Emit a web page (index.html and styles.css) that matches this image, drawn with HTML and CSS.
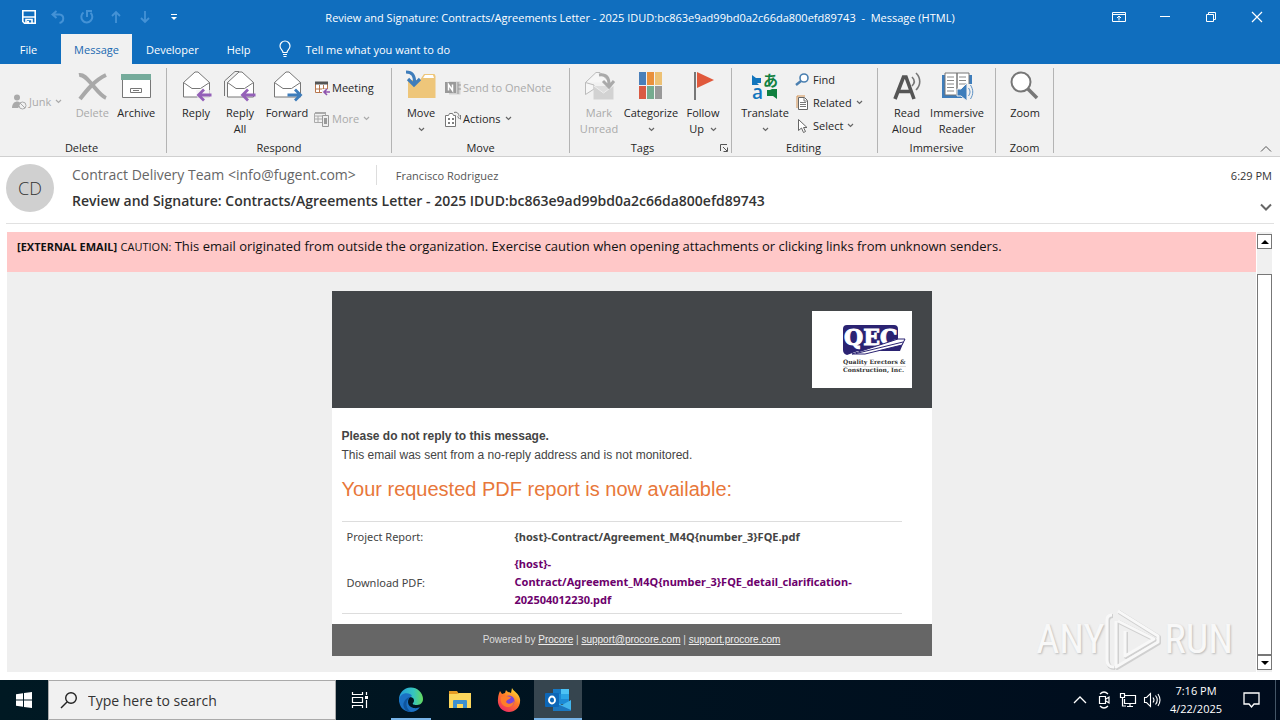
FILE: index.html
```html
<!DOCTYPE html>
<html lang="en">
<head>
<meta charset="utf-8">
<title>Message (HTML)</title>
<link rel="stylesheet" href="styles.css">
</head>
<body>
<svg class="defs" aria-hidden="true">
  <symbol id="caret" viewBox="0 0 7 5"><path d="M1 1l2.5 2.5L6 1" fill="none" stroke="currentColor" stroke-width="1.2"/></symbol>
  <symbol id="envelope" viewBox="0 0 32 32"><path d="M3.500 12.500L15 2h3l11.500 10.500V27H3.500z" fill="#fff" stroke="#777"/><path d="M3.500 12.500L12 18.500h8.500l9-6" fill="none" stroke="#777"/></symbol>
  <symbol id="arrow" viewBox="0 0 16 14"><path d="M15.500 7H3M8 1.500L2.500 7 8 12.500" fill="none" stroke="currentColor" stroke-width="2.800"/></symbol>
</svg>
<div class="window">
  <header class="titlebar">
    <div class="quick">
      <button class="qbtn" aria-label="Save"><svg width="16" height="16" viewBox="0 0 16 16"><path d="M1.800 1.800h12.400v12.400H3.500L1.800 12.500z" fill="none" stroke="#fff" stroke-width="1.600"/><path d="M2 8h12M5 14v-3.500h6V14" fill="none" stroke="#fff" stroke-width="1.600"/><path d="M6 12h2v2.500H6z" fill="#fff"/></svg></button>
      <button class="qbtn dim" aria-label="Undo"><svg width="16" height="16" viewBox="0 0 16 16"><path d="M6.500 2L2.500 5.500l4 3.500M3 5.500h6.500c5 .5 5 7.500 0 8.500" fill="none" stroke="currentColor" stroke-width="2"/></svg></button>
      <button class="qbtn dim" aria-label="Redo"><svg width="16" height="16" viewBox="0 0 16 16"><path d="M4.500 3.500A5.500 5.500 0 1 0 11.500 3.800M8 8V2h5" fill="none" stroke="currentColor" stroke-width="2"/></svg></button>
      <button class="qbtn dim" aria-label="Previous item"><svg width="16" height="16" viewBox="0 0 16 16"><path d="M8 14V3.500M4 7l4-4 4 4" fill="none" stroke="currentColor" stroke-width="1.800"/></svg></button>
      <button class="qbtn dim" aria-label="Next item"><svg width="16" height="16" viewBox="0 0 16 16"><path d="M8 2v10.500M4 9l4 4 4-4" fill="none" stroke="currentColor" stroke-width="1.800"/></svg></button>
      <button class="qbtn" aria-label="Customize toolbar"><svg width="16" height="16" viewBox="0 0 16 16"><path d="M5 5.500h6" stroke="#fff"/><path d="M5 8h6l-3 3z" fill="#fff"/></svg></button>
    </div>
    <div class="wintitle">Review and Signature: Contracts/Agreements Letter - 2025 IDUD:bc863e9ad99bd0a2c66da800efd89743 &nbsp;-&nbsp; Message (HTML)</div>
    <div class="controls">
      <button aria-label="Ribbon display options"><svg width="14" height="12" viewBox="0 0 14 12"><path d="M.5 1.500h13v9H.5zM.5 3.500h13M7 9.500V5.500M5 7l2-2 2 2" fill="none" stroke="#fff"/></svg></button>
      <button aria-label="Minimize"><svg width="12" height="12" viewBox="0 0 12 12"><path d="M1 5.500h10" stroke="#fff"/></svg></button>
      <button aria-label="Restore"><svg width="12" height="12" viewBox="0 0 12 12"><path d="M1.500 3.500h7v7h-7zM3.500 3V1.500h7v7H9" fill="none" stroke="#fff"/></svg></button>
      <button aria-label="Close"><svg width="12" height="12" viewBox="0 0 12 12"><path d="M1 1l10 10M11 1L1 11" stroke="#fff" stroke-width="1.200"/></svg></button>
    </div>
  </header>
  <nav class="tabs">
    <button class="tab file">File</button>
    <button class="tab active">Message</button>
    <button class="tab">Developer</button>
    <button class="tab">Help</button>
    <label class="tell"><svg width="14" height="18" viewBox="0 0 14 18"><path d="M5 12.500C5 10 2 9.500 2 6a5 5 0 0 1 10 0c0 3.500-3 4-3 6.500zM5 14.500h4M5.500 16.500h3" fill="none" stroke="#fff" stroke-width="1.200"/></svg><input type="text" placeholder="Tell me what you want to do" aria-label="Tell me what you want to do"></label>
  </nav>

  <div class="ribbon">
    <section class="group g-delete">
      <div class="tools">
        <div class="stack one"><button class="small dis"><svg width="16" height="16" viewBox="0 0 16 16"><circle cx="6" cy="3.500" r="3" fill="#aaa"/><path d="M1 14c0-8 9-8 9-3l-3 3z" fill="#aaa"/><circle cx="11.500" cy="11.500" r="3.500" fill="#f1f1f1" stroke="#aaa"/><path d="M9 9l5 5" stroke="#aaa"/></svg>Junk<svg class="caret"><use href="#caret"/></svg></button></div>
        <button class="big dis"><svg width="32" height="32" viewBox="0 0 32 32"><path d="M3 5C8 4 12 10 16 14.500 20 19 25 26 30 28M30 5C19 10 11 20 4 29" fill="none" stroke="#a9a9a9" stroke-width="4"/></svg>Delete</button>
        <button class="big"><svg width="32" height="32" viewBox="0 0 32 32"><path d="M2.500 9.500h28v18h-28z" fill="#fff" stroke="#777"/><path d="M1 4h30v6H1z" fill="#75ab9b"/><path d="M10.500 18.500h11v4h-11z" fill="#fff" stroke="#777"/><path d="M13 20.500h6" stroke="#777"/></svg>Archive</button>
      </div><h2>Delete</h2>
    </section>
    <section class="group g-respond">
      <div class="tools">
        <button class="big"><svg width="32" height="32" viewBox="0 0 32 32"><use href="#envelope"/><path d="M16 20h16v12H18z" fill="#f1f1f1" opacity=".7"/><use class="purple" href="#arrow" x="16" y="18" width="16" height="14"/></svg>Reply</button>
        <button class="big"><svg width="32" height="32" viewBox="0 0 32 32"><path d="M.5 26V11L11 1.500h4" fill="none" stroke="#777"/><use href="#envelope"/><use class="purple" href="#arrow" x="16" y="18" width="16" height="14"/></svg>Reply<br>All</button>
        <button class="big wide"><svg width="32" height="32" viewBox="0 0 32 32"><use href="#envelope"/><g transform="rotate(180 24 25)"><use class="blue" href="#arrow" x="16" y="18" width="16" height="14"/></g></svg>Forward</button>
        <div class="stack">
          <button class="small"><svg width="16" height="16" viewBox="0 0 16 16"><path d="M1.500 2.500h12v10h-12zM5.500 5v8M9.500 5v8M2 9h11" fill="#fff" stroke="#b8764d"/><path d="M1 1.500h13v3H1z" fill="#555"/><path d="M8 9h8v7H8z" fill="#f1f1f1"/><path d="M16 12h-6M13 9l-3 3 3 3" fill="none" stroke="#8f53ad" stroke-width="1.600"/></svg>Meeting</button>
          <button class="small dis"><svg width="16" height="16" viewBox="0 0 16 16"><path d="M.5 2.500h11v9H.5zM1 5h10M4 5v6M1 8h7" fill="none" stroke="#aaa"/><path d="M8.500 4.500h6v11h-6z" fill="#eee" stroke="#999"/><path d="M10 7h3v6h-3z" fill="#999"/><path d="M1 1h11v2H1z" fill="#aaa"/></svg>More<svg class="caret"><use href="#caret"/></svg></button>
        </div>
      </div><h2>Respond</h2>
    </section>
    <section class="group g-move">
      <div class="tools">
        <button class="big"><svg width="32" height="32" viewBox="0 0 32 32"><path d="M3 10h12l4-6h10.500l1 2v22H3z" fill="#eec67a"/><path d="M20 5h8l1 3H18z" fill="#fff"/><path d="M1 2c6 0 9 3 8.500 12M3 9l6 6 6-6" fill="none" stroke="#3e7dbb" stroke-width="3.200"/></svg>Move<svg class="caret under"><use href="#caret"/></svg></button>
        <div class="stack">
          <button class="small dis"><svg width="16" height="16" viewBox="0 0 16 16"><path d="M4 1.500h11.500v13H4z" fill="#d0d0d0"/><path d="M13 2v12M13 5h3M13 9h3" stroke="#999"/><path d="M0 2h11v11H0z" fill="#999"/><path d="M3.500 10.500v-6l4 6v-6" fill="none" stroke="#fff" stroke-width="1.500"/></svg>Send to OneNote</button>
          <button class="small"><svg width="16" height="16" viewBox="0 0 16 16"><path d="M.5 4.500h3l1-2h3l1 2h2v11H.5z" fill="#fff" stroke="#777"/><path d="M3 8h2M3 12h2M7 8h2M7 12h2" stroke="#555" stroke-width="1.400"/><path d="M9 1.500c3-1 5 1 5 4M15.500 4v4.500M12.500 5.500l2 2.500" fill="none" stroke="#777"/></svg>Actions<svg class="caret"><use href="#caret"/></svg></button>
        </div>
      </div><h2>Move</h2>
    </section>
    <section class="group g-tags">
      <div class="tools">
        <button class="big dis"><svg width="32" height="32" viewBox="0 0 32 32"><path d="M2.500 12.500L13 2.500h4l10 10M2.500 12.500v12L11 19V15zM13 19h17" fill="#f6f6f6" stroke="#bbb"/><path d="M10.500 16h20v13.500h-20z" fill="#d2d2d2"/><path d="M11 16l9.500 7 9.500-7" fill="#ddd" stroke="#eee"/><path d="M16 5c8-1 10 3 10 10M20 11l6 6 5-6" fill="none" stroke="#aaa" stroke-width="3"/></svg>Mark<br>Unread</button>
        <button class="big categorize"><svg width="32" height="32" viewBox="0 0 32 32"><path fill="#4a7fb9" d="M4 2h7v13H4z"/><path fill="#e9903c" d="M12 2h7v13h-7z"/><path fill="#edc174" d="M20 2h7v13h-7z"/><path fill="#d95a43" d="M4 16h7v13H4z"/><path fill="#75ab8f" d="M12 16h7v13h-7z"/><path fill="#999" d="M20 16h7v13h-7z"/></svg>Categorize<svg class="caret under"><use href="#caret"/></svg></button>
        <button class="big"><svg width="32" height="32" viewBox="0 0 32 32"><path d="M8 2v28" stroke="#777" stroke-width="2"/><path d="M10 2l17 8-17 8z" fill="#e0593c"/></svg>Follow<span>Up <svg class="caret"><use href="#caret"/></svg></span></button>
      </div><h2>Tags</h2>
      <button class="launcher" aria-label="Tags options"><svg width="8" height="8" viewBox="0 0 8 8"><path d="M.5 7V.5H7M3 3l4 4M7.500 3.500v4h-4" fill="none" stroke="#555"/></svg></button>
    </section>
    <section class="group g-editing">
      <div class="tools">
        <button class="big translate"><svg width="32" height="32" viewBox="0 0 32 32"><path d="M3 5l4 3h5v5H8l2 2H3z" fill="#1275bd"/><path d="M28 29l-4-3h-6v-6h5l-2-1h7z" fill="#10803f"/><text x="3" y="29" class="latin">a</text><text x="14" y="16" class="kana">あ</text></svg>Translate<svg class="caret under"><use href="#caret"/></svg></button>
        <div class="stack three">
          <button class="small"><svg width="16" height="16" viewBox="0 0 16 16"><circle cx="9" cy="6" r="4" fill="#fff" stroke="#4a7fb0" stroke-width="1.600"/><path d="M6 9l-5 4" stroke="#4a7fb0" stroke-width="2.400"/></svg>Find</button>
          <button class="small"><svg width="16" height="16" viewBox="0 0 16 16"><path d="M2 13V1h8" fill="none" stroke="#d39150"/><path d="M3.500 2.500h6l3 3v9h-9z" fill="#fff" stroke="#666"/><path d="M5 7.500h6M5 9.500h6M5 11.500h6M9 3v3h3" fill="none" stroke="#777"/></svg>Related<svg class="caret"><use href="#caret"/></svg></button>
          <button class="small"><svg width="16" height="16" viewBox="0 0 16 16"><path d="M3.500 1.500v11l3-2.500 2 4.500 2-1-2-4h3.500z" fill="#fff" stroke="#666"/></svg>Select<svg class="caret"><use href="#caret"/></svg></button>
        </div>
      </div><h2>Editing</h2>
    </section>
    <section class="group g-immersive">
      <div class="tools">
        <button class="big"><svg width="32" height="32" viewBox="0 0 32 32"><path d="M4 29L12.500 7h2.500L23 29M7 21.500h13" fill="none" stroke="#555" stroke-width="3.600"/><path d="M21 7c3 3 3 6 0 9M25 3c5 5 5 12 0 17" fill="none" stroke="#777" stroke-width="1.600"/></svg>Read<br>Aloud</button>
        <button class="big immersive"><svg width="32" height="32" viewBox="0 0 32 32"><path d="M1 5h30v23H1z" fill="#3e7dbb"/><path d="M4 3h12v22H4zM16 3h12v22H16z" fill="#fff" stroke="#777"/><path d="M6 7h7M6 10.500h7M6 14h7M6 17.500h7M6 21h7M18 7h7M18 10.500h7M18 14h7" stroke="#888"/><path d="M16 19h4l6-6v18l-6-5h-4z" fill="#3e7dbb" stroke="#f1f1f1"/><path d="M26 14h6v16h-6z" fill="#f1f1f1"/><path d="M27.500 18c2 3 2 5 0 8M29.500 15c3 5 3 9 0 14" fill="none" stroke="#5b90c4"/></svg>Immersive<br>Reader</button>
      </div><h2>Immersive</h2>
    </section>
    <section class="group g-zoom">
      <div class="tools">
        <button class="big"><svg width="32" height="32" viewBox="0 0 32 32"><circle cx="12" cy="12" r="9.500" fill="#fff" stroke="#777" stroke-width="2"/><path d="M18.500 18.500L28 28" stroke="#777" stroke-width="3.600"/></svg>Zoom</button>
      </div><h2>Zoom</h2>
    </section>
    <button class="collapse" aria-label="Collapse ribbon"><svg width="12" height="8" viewBox="0 0 12 8"><path d="M1 6.500l5-5 5 5" fill="none" stroke="#555"/></svg></button>
  </div>

  <section class="summary">
    <div class="avatar">CD</div>
    <div class="who">
      <div class="people"><span class="from">Contract Delivery Team &lt;info@fugent.com&gt;</span><span class="to">Francisco Rodriguez</span></div>
      <h1>Review and Signature: Contracts/Agreements Letter - 2025 IDUD:bc863e9ad99bd0a2c66da800efd89743</h1>
    </div>
    <div class="when"><time>6:29 PM</time><button aria-label="Expand header"><svg width="12" height="8" viewBox="0 0 12 8"><path d="M1 1.500l5 5 5-5" fill="none" stroke="#666" stroke-width="2"/></svg></button></div>
  </section>

  <main class="reading">
    <div class="mail">
      <p class="caution"><b>[EXTERNAL EMAIL]</b> <small>CAUTION:</small> This email originated from outside the organization. Exercise caution when opening attachments or clicking links from unknown senders.</p>
      <article class="card">
        <div class="brand">
          <svg width="100" height="77" viewBox="0 0 100 77" role="img" aria-label="QEC Quality Erectors and Construction, Inc."><path d="M0 0h100v77H0z" fill="#fff"/><path d="M35 14h47q4 0 4 4v10l7 0-5 12H46l-11 4q-4-1-4-5V18q0-4 4-4z" fill="#2b2372"/><text x="32" y="34" class="qec">QEC</text><path d="M40 43L86 28h7l-3 6-37 9z" fill="#fff" stroke="#2b2372"/><path d="M44 42.500L91 31" stroke="#2b2372"/><text x="31" y="53" class="firm">Quality Erectors &amp;</text><path d="M31 55.500h63" stroke="#ddd"/><text x="31" y="61" class="firm">Construction, Inc.</text></svg>
        </div>
        <div class="content">
          <p class="noreply">Please do not reply to this message.</p>
          <p class="note">This email was sent from a no-reply address and is not monitored.</p>
          <h2 class="avail">Your requested PDF report is now available:</h2>
          <table>
            <tr><th scope="row">Project Report:</th><td>{host}-Contract/Agreement_M4Q{number_3}FQE.pdf</td></tr>
            <tr><th scope="row">Download PDF:</th><td><a href="#">{host}-<br>Contract/Agreement_M4Q{number_3}FQE_detail_clarification-<br>202504012230.pdf</a></td></tr>
          </table>
        </div>
        <footer class="powered">Powered by <a href="#">Procore</a> | <a href="#">support@procore.com</a> | <a href="#">support.procore.com</a></footer>
      </article>
    </div>
    <div class="scroll">
      <button aria-label="Scroll up"><svg width="8" height="4" viewBox="0 0 8 4"><path d="M0 4l4-4 4 4z"/></svg></button>
      <div class="thumb"></div>
      <button aria-label="Scroll down"><svg width="8" height="4" viewBox="0 0 8 4"><path d="M0 0l4 4 4-4z"/></svg></button>
    </div>
    <div class="watermark"><span>ANY</span><svg width="60" height="64" viewBox="0 0 60 64"><path d="M14 4l40 25v6L12 60V14M14 14l36 18-29 17V24M8 8q-5 0-5 5v40q0 7 7 7" fill="none" stroke="#d0d0d0" stroke-width="4" stroke-linejoin="round"/><path d="M13 3l40 25v6L11 59V13M13 13l36 18-29 17V23M7 7q-5 0-5 5v40q0 7 7 7" fill="none" stroke="#f8f8f8" stroke-width="3" stroke-linejoin="round"/></svg><span>RUN</span></div>
  </main>

  <footer class="taskbar">
    <button class="task" aria-label="Start"><svg width="16" height="16" viewBox="0 0 16 16"><path d="M0 2.200L7 1.200V7.500H0zM8 1l8-1v7.500H8zM0 8.500h7v6.300L0 13.800zM8 8.500h8V16l-8-1z" fill="#fff"/></svg></button>
    <label class="search"><svg width="18" height="18" viewBox="0 0 18 18"><circle cx="11" cy="7" r="5.300" fill="none" stroke="#222" stroke-width="1.400"/><path d="M7 11l-6 6" stroke="#222" stroke-width="1.400"/></svg><input type="text" placeholder="Type here to search" aria-label="Type here to search"></label>
    <button class="task view" aria-label="Task view"><svg width="16" height="16" viewBox="0 0 16 16"><path d="M.5 0v2.500h10V0M.5 5.500h10v5H.5zM.5 16v-2.500h10V16M14.500 0v3M14.500 8v8" fill="none" stroke="#fff" stroke-width="1.200"/><path d="M13 4h3v3h-3z" fill="#fff"/></svg></button>
    <button class="task open" aria-label="Edge"><svg width="26" height="26" viewBox="0 0 26 26"><defs><linearGradient id="eg" x1="0" x2="1"><stop offset="0" stop-color="#239bdc"/><stop offset=".6" stop-color="#35c5c0"/><stop offset="1" stop-color="#65da5c"/></linearGradient></defs><path d="M1 13a12 12 0 0 1 24-1c0 5-4 6-7 6-2 0-4-1-3-2 2-2 1-6-3-6-5 0-8 4-7 8 0 0-4-2-4-5z" fill="url(#eg)"/><path d="M1 12c2-7 11-7 13-3-4 1-6 8-1 11 4 2 7 1 9 0-3 5-9 6-14 4-5-2-7-7-7-12z" fill="#1b71c4"/><path d="M13 10c-5 2-7 10 0 15-6 0-9-6-7-10 1-3 4-5 7-5z" fill="#0f559e"/></svg></button>
    <button class="task" aria-label="File Explorer"><svg width="22" height="20" viewBox="0 0 22 20"><path d="M0 1h8l2 3h12v3H0z" fill="#e59b24"/><path d="M0 4h8l2-1h12v15H0z" fill="#fbd65c"/><path d="M4 18v-7q0-1 1-1h12q1 0 1 1v7h-4v-4H8v4z" fill="#3c8fd0"/></svg></button>
    <button class="task" aria-label="Firefox"><svg width="24" height="24" viewBox="0 0 24 24"><defs><linearGradient id="fx" x1=".8" y1="0" x2=".2" y2="1"><stop offset="0" stop-color="#ffe634"/><stop offset=".45" stop-color="#ff7a28"/><stop offset="1" stop-color="#ed2666"/></linearGradient></defs><path d="M3 3l2 3 3-1 1-3c1 2 3 2 5 3l1-5c1 3 7 5 8 11 1 8-5 13-11 13C5 24 0 18 1 11c0-3 1-6 2-8z" fill="url(#fx)"/><circle cx="12" cy="13" r="5.500" fill="#7b45d9"/><path d="M4 9c4-2 7 0 10 0-1 3-4 2-5 5 2 3 6 2 8-1 0 6-7 8-11 4-2-2-3-5-2-8z" fill="#ff7d2a"/></svg></button>
    <button class="task open current" aria-label="Outlook"><svg width="26" height="24" viewBox="0 0 26 24"><path d="M8 1h16v15H8z" fill="#1b8ad5"/><path d="M16 1h8v5h-8z" fill="#4cc2f4"/><path d="M8 1h8v5H8z" fill="#1679c5"/><path d="M16 6h8v5h-8z" fill="#2aa4e5"/><path d="M8 12l9 5 9-5v10H8z" fill="#42b5ec"/><path d="M8 14l18 8v1H8z" fill="#1b77c0"/><rect y="5" width="14" height="14" rx="1" fill="#0d67b7"/><ellipse cx="7" cy="12" rx="3" ry="3.500" fill="none" stroke="#fff" stroke-width="1.900"/></svg></button>
    <div class="tray">
      <button aria-label="Show hidden icons"><svg width="14" height="8" viewBox="0 0 14 8"><path d="M1 7l6-6 6 6" fill="none" stroke="#fff" stroke-width="1.300"/></svg></button>
      <button aria-label="Meet Now"><svg width="16" height="18" viewBox="0 0 16 18"><path d="M3.500 5.500h6v7h-6zM10 8l3-2v6l-3-2M4 3q4-4 8 0M4 15q4 4 8 0" fill="none" stroke="#fff" stroke-width="1.200"/></svg></button>
      <button aria-label="Network"><svg width="18" height="16" viewBox="0 0 18 16"><path d="M6 3.500h10.500v8h-11V7M8 14.500h6M11 12v2M1.500 1.500h4v4h-4zM3.500 6v8H7" fill="none" stroke="#fff" stroke-width="1.200"/></svg></button>
      <button aria-label="Volume"><svg width="18" height="16" viewBox="0 0 18 16"><path d="M1.500 5.500h2l4-4v13l-4-4h-2zM10 5.500q2 2.500 0 5M12.500 3.500q3.500 4.500 0 9M15 2q4 6 0 12" fill="none" stroke="#fff" stroke-width="1.100"/></svg></button>
      <div class="clock"><time>7:16 PM</time><time>4/22/2025</time></div>
      <button class="notify" aria-label="Notifications"><svg width="18" height="18" viewBox="0 0 18 18"><path d="M1 2h15v11h-5l-2.500 3L6 13H1z" fill="none" stroke="#fff" stroke-width="1.300"/></svg></button>
    </div>
  </footer>
</div>
</body>
</html>
```
FILE: styles.css
```css
* { box-sizing: border-box; }
body { margin: 0; font-family: "Open Sans", "Noto Sans", sans-serif; font-size: 11px; color: #333; background: #fff; }
button { display: flex; align-items: center; justify-content: center; margin: 0; padding: 0; border: 0; background: none; font: inherit; color: inherit; }
input { min-width: 0; border: 0; padding: 0; background: none; font: inherit; outline: 0; }
h1, h2, p { margin: 0; }
svg { flex: none; overflow: visible; }
.defs { display: none; }
.window { display: flex; flex-direction: column; min-height: 100vh; }

.titlebar { display: grid; grid-template-columns: 1fr auto 1fr; align-items: center; height: 34px; background: #106ebe; color: #fff; }
.quick { display: flex; padding-left: 14px; }
.qbtn { width: 29px; height: 32px; }
.dim { color: #4492d6; }
.wintitle { white-space: nowrap; }
.controls { display: flex; justify-content: flex-end; height: 30px; }
.controls button { width: 46px; }

.tabs { display: flex; height: 30px; background: #106ebe; color: #fff; }
.tab { padding: 0 14px; }
.tab.file { width: 61px; padding: 0 16px 0 12px; }
.tab.active { width: 71px; padding: 0; background: #f1f1f1; color: #2068b0; }
.tell { display: flex; align-items: center; gap: 13px; padding-left: 14px; }
.tell input { width: 240px; color: #fff; }
.tell input::placeholder { color: #fff; opacity: 1; }

.ribbon { display: flex; height: 93px; padding: 4px 0 3px; background: #f1f1f1; border-bottom: 1px solid #d0d0d0; color: #262626; }
.group { display: flex; flex-direction: column; position: relative; border-right: 1px solid #b4b4b4; }
.group h2 { padding-right: 7px; font-size: 11px; font-weight: 400; line-height: 10px; text-align: center; }
.tools { display: flex; flex: 1; }
.big { flex-direction: column; justify-content: flex-start; width: 44px; padding-top: 2px; line-height: 16px; white-space: nowrap; }
.big > svg:first-child { margin-bottom: 3px; }
.big span { display: flex; align-items: center; gap: 4px; }
.wide { width: 50px; }
.categorize { width: 60px; }
.translate, .immersive { width: 56px; }
.small { gap: 2px; justify-content: flex-start; height: 23px; white-space: nowrap; }
.stack { display: flex; flex-direction: column; gap: 8px; padding: 8px 0 0 2px; }
.stack.three { gap: 0; padding-top: 0; }
.stack.one { padding: 22px 8px 0 0; }
.dis { color: #aaa; }
.caret { width: 7px; height: 5px; margin-left: 2px; color: #666; }
.dis .caret { color: #aaa; }
.caret.under { margin-top: 6px; margin-left: 0; }
.g-delete { width: 167px; padding-left: 11px; }
.g-respond { width: 225px; padding-left: 7px; }
.g-move { width: 178px; padding-left: 7px; }
.g-tags { width: 162px; padding-left: 7px; }
.g-editing { width: 146px; padding-left: 5px; }
.g-immersive { width: 118px; padding-left: 7px; }
.g-zoom { width: 58px; padding-left: 7px; }
.g-delete h2, .g-move h2, .g-tags h2 { margin-left: -7px; }
.g-move h2 { padding-right: 0; }
.g-tags h2 { padding-right: 16px; }
.latin { font: 600 19px "Open Sans", sans-serif; fill: #1275bd; }
.kana { font: 700 15px "Noto Sans CJK JP", sans-serif; fill: #10803f; }
.purple { color: #9460b8; }
.blue { color: #3e7dbb; }
.launcher { position: absolute; right: 3px; bottom: 1px; }
.collapse { align-self: flex-end; margin-left: auto; padding: 0 8px 0 0; }

.summary { display: flex; gap: 18px; height: 67px; margin: 0 6px; padding-top: 7px; border-bottom: 1px solid #e1e1e1; }
.avatar { display: flex; align-items: center; justify-content: center; width: 48px; height: 48px; border-radius: 50%; background: #d0d0d0; font-size: 18px; font-weight: 300; }
.who { flex: 1; }
.people { display: flex; align-items: center; height: 22px; }
.from { padding-right: 20px; border-right: 1px solid #ddd; color: #666; font-size: 14px; line-height: 20px; }
.to { padding-left: 19px; color: #555; }
.who h1 { font-size: 14px; font-weight: 600; line-height: 30px; }
.when { display: flex; flex-direction: column; align-items: flex-end; gap: 19px; padding: 4px 2px 0 0; line-height: 16px; }

.reading { display: flex; position: relative; flex: 1; gap: 1px; padding: 8px 8px 8px 7px; }
.mail { flex: 1; background: #efefef; }
.caution { min-height: 40px; padding: 4px 10px; background: #ffc8c8; color: #111; font-size: 13px; line-height: 20px; }
.caution b, .caution small { font-size: 11px; }
.card { width: 600px; margin: 19px auto 16px; background: #fff; }
.brand { display: flex; justify-content: flex-end; padding: 20px; background: #434649; }
.qec { font: 700 22px "DejaVu Serif", serif; fill: #fff; stroke: #fff; stroke-width: 1px; }
.firm { font: 700 6px "DejaVu Serif", serif; fill: #333; }
.content { padding: 18px 30px 10px 10px; color: #444; }
.noreply { font: 700 12px/20px "Liberation Sans", sans-serif; }
.note { font: 12px/18px "Liberation Sans", sans-serif; }
.avail { padding: 14px 0 21px; font: 20px/22px "Liberation Sans", sans-serif; color: #e8773a; }
.content table { width: 560px; border-collapse: collapse; border-top: 1px solid #ddd; border-bottom: 1px solid #ddd; font-family: "Noto Sans", sans-serif; font-size: 11px; line-height: 18px; }
.content th { width: 168px; padding: 6px 5px; font-weight: 400; text-align: left; }
.content td { padding: 6px 5px; font-weight: 700; }
.content tr:last-child td { padding: 3px 5px 4px; }
.content td a { color: #6c006c; text-decoration: none; }
.powered { background: #666; color: #ddd; font: 10px/32px "Liberation Sans", sans-serif; text-align: center; }
.powered a { color: #eee; }
.scroll { display: flex; flex-direction: column; width: 15px; padding: 2px 0; background: #f0f0f0; }
.scroll button { height: 15px; border: 1px solid #777; background: #fff; }
.thumb { flex: 1; margin-top: 25px; border: 1px solid #777; background: #fff; }
.watermark { display: flex; position: absolute; right: 47px; bottom: 8px; align-items: center; color: #f8f8f8; font: 40px/44px "Roboto Condensed", "Liberation Sans Narrow", "Open Sans", sans-serif; text-shadow: 1px 1px 2px #bbb; }

.taskbar { display: flex; height: 40px; background: linear-gradient(90deg, #001923, #000c1d); color: #fff; }
.task { width: 48px; margin-right: 1px; }
.task:first-child { margin-right: 0; }
.search { display: flex; align-items: center; gap: 10px; width: 288px; padding-left: 11px; border: 1px solid #aaa; background: #f1f1f1; }
.search input { flex: 1; font-size: 14px; color: #333; }
.search input::placeholder { color: #333; opacity: 1; }
.view { margin-right: 3px; }
.open { border-bottom: 2px solid #78b4e8; padding-top: 2px; }
.task.open:not(.current) { width: 40px; margin: 0 5px 0 4px; }
.current { background: #36454f; }
.tray { display: flex; align-items: center; margin-left: auto; padding-right: 4px; }
.tray button { width: 24px; height: 40px; }
.clock { display: flex; flex-direction: column; align-items: center; width: 64px; font-size: 11px; line-height: 18px; }
.tray .notify { width: 48px; border-right: 1px solid #456; }
```
